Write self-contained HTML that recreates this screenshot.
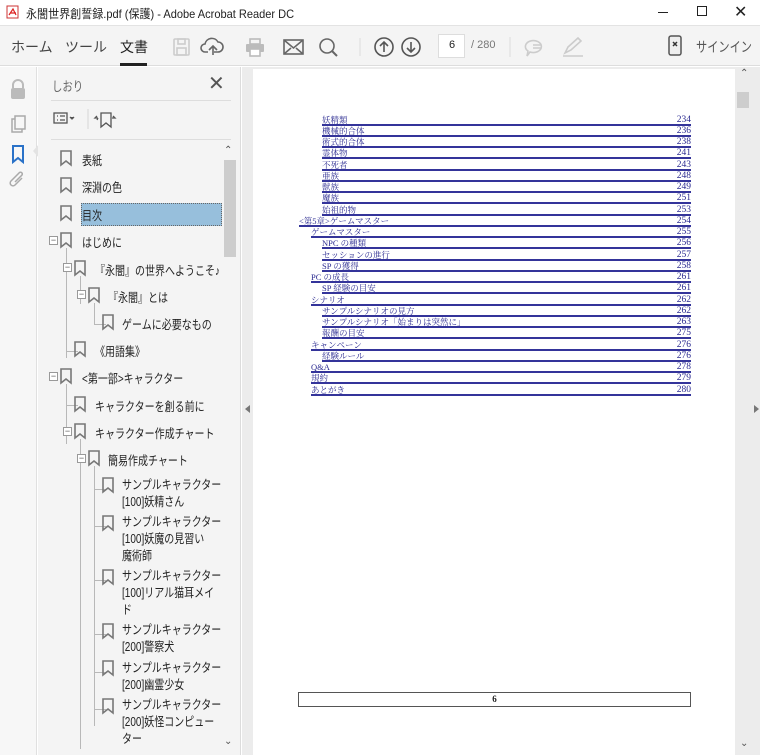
<!DOCTYPE html>
<html><head><meta charset="utf-8"><style>
*{margin:0;padding:0;box-sizing:border-box}
body{width:760px;height:755px;overflow:hidden;background:#fff;font-family:"Liberation Sans","Noto Sans CJK JP",sans-serif;position:relative;color:#222}
.a{position:absolute}
.t{font-size:12.5px;color:#222;white-space:nowrap}
.s{transform:scaleX(0.8);transform-origin:0 0}
.toc{position:absolute;height:10px;border-bottom:2px solid #34349a;font-family:"Liberation Serif","Noto Serif CJK SC",serif;font-size:8.5px;line-height:9px;color:#2a2a90;right:69px}
.toc span{position:absolute;right:0;top:0;font-size:9.5px}
.line{position:absolute;background:#b8b8b8}
.box{position:absolute;width:9px;height:9px;border:1px solid #999;background:#fff;font-size:9px;line-height:6px;text-align:center;color:#555}
</style></head><body>
<div class="a" style="left:0;top:0;width:760px;height:25px;background:#fff"></div>
<svg class="a" style="left:6px;top:5px" width="14" height="14"><rect x="1" y="1" width="11" height="12" fill="#fff" stroke="#c33"/><path d="M3 10 L7 4 L10 10 M4 8 H10" stroke="#d22" fill="none" stroke-width="1.2"/></svg>
<div class="a t s" style="left:26px;top:5px;font-size:12px;transform:scaleX(0.92)">永闇世界創誓録.pdf (保護) - Adobe Acrobat Reader DC</div>
<div class="a" style="left:658px;top:12px;width:10px;height:1px;background:#222"></div>
<div class="a" style="left:697px;top:6px;width:10px;height:10px;border:1px solid #222"></div>
<div class="a t" style="left:734px;top:2px;font-size:16px">✕</div>
<div class="a" style="left:0;top:25px;width:760px;height:41px;background:#f4f4f4;border-top:1px solid #e3e3e3;border-bottom:1px solid #ddd"></div>
<div class="a t" style="left:11px;top:37px;font-size:14px;color:#444">ホーム</div>
<div class="a t" style="left:65px;top:37px;font-size:14px;color:#444">ツール</div>
<div class="a t" style="left:120px;top:37px;font-size:14px;color:#222">文書</div>
<div class="a" style="left:120px;top:63px;width:27px;height:3px;background:#222"></div>
<svg class="a" style="left:170px;top:36px" width="200" height="22" fill="none" stroke-width="1.6">
<rect x="4" y="3" width="15" height="16" rx="1" stroke="#ccc"/><rect x="8" y="3" width="7" height="5" stroke="#ccc"/><rect x="7" y="12" width="9" height="7" stroke="#ccc"/>
<path d="M44 16 h4 a5 5 0 0 0 0-10 a7 7 0 0 0-13 2 a4 4 0 0 0 0 8 h3 M43 19 v-9 m-4 4 l4-4 4 4" stroke="#666"/>
<rect x="76" y="8" width="18" height="8" rx="1" fill="#bbb"/><rect x="80" y="3" width="10" height="5" stroke="#bbb"/><rect x="80" y="13" width="10" height="7" fill="#fff" stroke="#bbb"/>
<rect x="114" y="4" width="19" height="14" stroke="#666"/><path d="M114 4 l9.5 8 9.5-8 M114 18 l7-6 M133 18 l-7-6" stroke="#666"/>
<circle cx="157" cy="10" r="7" stroke="#666"/><path d="M162 15 l5 5" stroke="#666" stroke-width="2"/>
<path d="M190 2 v18" stroke="#ddd" stroke-width="1"/>
</svg>
<svg class="a" style="left:372px;top:35px" width="180" height="24" fill="none" stroke="#555" stroke-width="1.6">
<circle cx="12" cy="12" r="9"/><path d="M12 17 V7 m-4 4 l4-4 4 4"/>
<circle cx="39" cy="12" r="9"/><path d="M39 7 v10 m-4-4 l4 4 4-4"/>
<path d="M138 2 v20" stroke="#ddd" stroke-width="1"/>
<path d="M158 17 l-3 4 1-5 a8 6 0 1 1 2 1z" stroke="#ccc"/><path d="M161 10 h8 M161 13 h8" stroke="#ccc"/>
</svg>
<svg class="a" style="left:560px;top:35px" width="28" height="24" fill="none" stroke="#ccc" stroke-width="1.6"><path d="M5 18 l3-6 10-9 3 3-10 9z M3 21 h20"/></svg>
<div class="a" style="left:438px;top:34px;width:27px;height:24px;background:#fff;border:1px solid #ddd"></div>
<div class="a t" style="left:449px;top:39px;font-size:11px">6</div>
<div class="a t" style="left:471px;top:39px;font-size:11px;color:#777">/ 280</div>
<svg class="a" style="left:667px;top:34px" width="18" height="24"><rect x="2" y="2" width="12" height="19" rx="2" fill="#eee" stroke="#555" stroke-width="1.5"/><path d="M6 8 l4 4 M10 8 l-4 4" stroke="#333" stroke-width="1.5"/></svg>
<div class="a t s" style="left:696px;top:37px;font-size:14px;color:#555">サインイン</div>
<div class="a" style="left:0;top:67px;width:37px;height:688px;background:#f7f7f7;border-right:1px solid #e0e0e0"></div>
<svg class="a" style="left:8px;top:78px" width="20" height="120" fill="none" stroke-width="1.5">
<path d="M5 10 v-3 a5 5 0 0 1 10 0 v3" stroke="#bbb" stroke-width="2"/><rect x="3" y="10" width="14" height="11" rx="2" fill="#bbb"/>
<rect x="7" y="38" width="10" height="13" stroke="#aaa"/><path d="M7 41 h-3 v13 h10 v-3" stroke="#aaa"/>
<path d="M5 68 h10 v16 l-5-4 -5 4z" stroke="#2a72c8" stroke-width="2"/>
<path d="M14 100 l-7 7 a2.5 2.5 0 0 1-4-4 l8-8 a1.6 1.6 0 0 1 3 2 l-7 7" stroke="#aaa"/>
</svg>
<div class="a" style="left:33px;top:144px;width:0;height:0;border-top:7px solid transparent;border-bottom:7px solid transparent;border-right:6px solid #e3e3e3"></div>
<div class="a" style="left:38px;top:67px;width:203px;height:688px;background:#f4f4f4;border-right:1px solid #dcdcdc"></div>
<div class="a t s" style="left:52px;top:76px;font-size:13px;color:#666">しおり</div>
<div class="a t" style="left:208px;top:71px;font-size:20px;color:#555">✕</div>
<div class="a" style="left:51px;top:100px;width:180px;height:1px;background:#ddd"></div>
<svg class="a" style="left:52px;top:109px" width="70" height="22" fill="none" stroke="#555" stroke-width="1.3"><rect x="2" y="4" width="13" height="10"/><path d="M5 7h1 M8 7h5 M5 11h1 M8 11h5"/><path d="M18 8 l2 2 2-2" fill="#555"/><path d="M36 0 v20" stroke="#ddd"/><path d="M49 4 h10 v14 l-5-4-5 4z M46 9 h-3 l2-2 M46 9 l-1 2 M60 9 h3 l-2-2"/></svg>
<div class="a" style="left:51px;top:139px;width:180px;height:1px;background:#ddd"></div>
<div class="a t" style="left:224px;top:145px;font-size:10px;color:#555">⌃</div>
<div class="a" style="left:224px;top:160px;width:12px;height:97px;background:#cdcdcd"></div>
<div class="a t" style="left:224px;top:736px;font-size:10px;color:#555">⌄</div>
<div class="a" style="left:81px;top:203px;width:141px;height:23px;background:#97bfdc;border:1px dotted #666"></div>
<div class="line" style="left:66px;top:248px;width:1px;height:110px"></div>
<div class="line" style="left:66px;top:384px;width:1px;height:60px"></div>
<div class="line" style="left:80px;top:276px;width:1px;height:28px"></div>
<div class="line" style="left:94px;top:303px;width:1px;height:22px"></div>
<div class="line" style="left:80px;top:439px;width:1px;height:310px"></div>
<div class="line" style="left:94px;top:466px;width:1px;height:260px"></div>
<div class="line" style="left:94px;top:324px;width:12px;height:1px"></div>
<div class="line" style="left:66px;top:351px;width:12px;height:1px"></div>
<div class="line" style="left:66px;top:405px;width:12px;height:1px"></div>
<div class="line" style="left:94px;top:489px;width:12px;height:1px"></div>
<div class="line" style="left:94px;top:526px;width:12px;height:1px"></div>
<div class="line" style="left:94px;top:580px;width:12px;height:1px"></div>
<div class="line" style="left:94px;top:634px;width:12px;height:1px"></div>
<div class="line" style="left:94px;top:672px;width:12px;height:1px"></div>
<div class="line" style="left:94px;top:709px;width:12px;height:1px"></div>
<div class="box" style="left:49px;top:236px">−</div>
<div class="box" style="left:63px;top:263px">−</div>
<div class="box" style="left:77px;top:290px">−</div>
<div class="box" style="left:49px;top:372px">−</div>
<div class="box" style="left:63px;top:427px">−</div>
<div class="box" style="left:77px;top:454px">−</div>
<svg class="a" style="left:0;top:0" width="240" height="755" fill="none" stroke="#777" stroke-width="1.6">
<g id="b"><path d="M61 151 h10 v14 l-5-4-5 4z"/></g>
<use href="#b" y="27"/><use href="#b" y="55"/><use href="#b" y="82"/>
<use href="#b" x="14" y="110"/><use href="#b" x="28" y="137"/><use href="#b" x="42" y="164"/>
<use href="#b" x="14" y="191"/><use href="#b" y="218"/><use href="#b" x="14" y="246"/><use href="#b" x="14" y="273"/>
<use href="#b" x="28" y="300"/><use href="#b" x="42" y="327"/><use href="#b" x="42" y="365"/><use href="#b" x="42" y="419"/>
<use href="#b" x="42" y="473"/><use href="#b" x="42" y="510"/><use href="#b" x="42" y="548"/>
</svg>
<div class="a t s" style="left:82px;top:150px">表紙</div>
<div class="a t s" style="left:82px;top:177px">深淵の色</div>
<div class="a t s" style="left:82px;top:205px">目次</div>
<div class="a t s" style="left:82px;top:232px">はじめに</div>
<div class="a t s" style="left:95px;top:260px">『永闇』の世界へようこそ♪</div>
<div class="a t s" style="left:108px;top:287px">『永闇』とは</div>
<div class="a t s" style="left:122px;top:314px">ゲームに必要なもの</div>
<div class="a t s" style="left:95px;top:341px">《用語集》</div>
<div class="a t s" style="left:82px;top:368px">&lt;第一部&gt;キャラクター</div>
<div class="a t s" style="left:95px;top:396px">キャラクターを創る前に</div>
<div class="a t s" style="left:95px;top:423px">キャラクター作成チャート</div>
<div class="a t s" style="left:108px;top:450px">簡易作成チャート</div>
<div class="a t s" style="left:122px;top:477px;line-height:17px">サンプルキャラクター<br>[100]妖精さん</div>
<div class="a t s" style="left:122px;top:514px;line-height:17px">サンプルキャラクター<br>[100]妖魔の見習い<br>魔術師</div>
<div class="a t s" style="left:122px;top:568px;line-height:17px">サンプルキャラクター<br>[100]リアル猫耳メイ<br>ド</div>
<div class="a t s" style="left:122px;top:622px;line-height:17px">サンプルキャラクター<br>[200]警察犬</div>
<div class="a t s" style="left:122px;top:660px;line-height:17px">サンプルキャラクター<br>[200]幽霊少女</div>
<div class="a t s" style="left:122px;top:697px;line-height:17px">サンプルキャラクター<br>[200]妖怪コンピュー<br>ター</div>
<div class="a" style="left:242px;top:67px;width:518px;height:688px;background:#ececec"></div>
<div class="a" style="left:253px;top:69px;width:482px;height:686px;background:#fff"></div>
<div class="a" style="left:245px;top:405px;width:0;height:0;border-top:4px solid transparent;border-bottom:4px solid transparent;border-right:5px solid #777"></div>
<div class="a" style="left:754px;top:405px;width:0;height:0;border-top:4px solid transparent;border-bottom:4px solid transparent;border-left:5px solid #777"></div>
<div class="a t" style="left:740px;top:68px;font-size:10px;color:#555">⌃</div>
<div class="a" style="left:737px;top:92px;width:12px;height:16px;background:#cdcdcd"></div>
<div class="a t" style="left:740px;top:738px;font-size:10px;color:#555">⌄</div>
<div class="toc" style="left:322px;top:116px">妖精類<span>234</span></div>
<div class="toc" style="left:322px;top:127px">機械的合体<span>236</span></div>
<div class="toc" style="left:322px;top:138px">術式的合体<span>238</span></div>
<div class="toc" style="left:322px;top:149px">霊体物<span>241</span></div>
<div class="toc" style="left:322px;top:161px">不死者<span>243</span></div>
<div class="toc" style="left:322px;top:172px">亜族<span>248</span></div>
<div class="toc" style="left:322px;top:183px">獣族<span>249</span></div>
<div class="toc" style="left:322px;top:194px">魔族<span>251</span></div>
<div class="toc" style="left:322px;top:206px">始祖的物<span>253</span></div>
<div class="toc" style="left:299px;top:217px">&lt;第5章&gt;ゲームマスター<span>254</span></div>
<div class="toc" style="left:311px;top:228px">ゲームマスター<span>255</span></div>
<div class="toc" style="left:322px;top:239px">NPC の種類<span>256</span></div>
<div class="toc" style="left:322px;top:251px">セッションの進行<span>257</span></div>
<div class="toc" style="left:322px;top:262px">SP の獲得<span>258</span></div>
<div class="toc" style="left:311px;top:273px">PC の成長<span>261</span></div>
<div class="toc" style="left:322px;top:284px">SP 経験の目安<span>261</span></div>
<div class="toc" style="left:311px;top:296px">シナリオ<span>262</span></div>
<div class="toc" style="left:322px;top:307px">サンプルシナリオの見方<span>262</span></div>
<div class="toc" style="left:322px;top:318px">サンプルシナリオ「始まりは突然に」<span>263</span></div>
<div class="toc" style="left:322px;top:329px">報酬の目安<span>275</span></div>
<div class="toc" style="left:311px;top:341px">キャンペーン<span>276</span></div>
<div class="toc" style="left:322px;top:352px">経験ルール<span>276</span></div>
<div class="toc" style="left:311px;top:363px">Q&amp;A<span>278</span></div>
<div class="toc" style="left:311px;top:374px">規約<span>279</span></div>
<div class="toc" style="left:311px;top:386px">あとがき<span>280</span></div>
<div class="a" style="left:298px;top:692px;width:393px;height:15px;border:1px solid #555;font-size:9px;font-weight:bold;text-align:center;line-height:13px;font-family:'Liberation Serif',serif">6</div>
</body></html>
